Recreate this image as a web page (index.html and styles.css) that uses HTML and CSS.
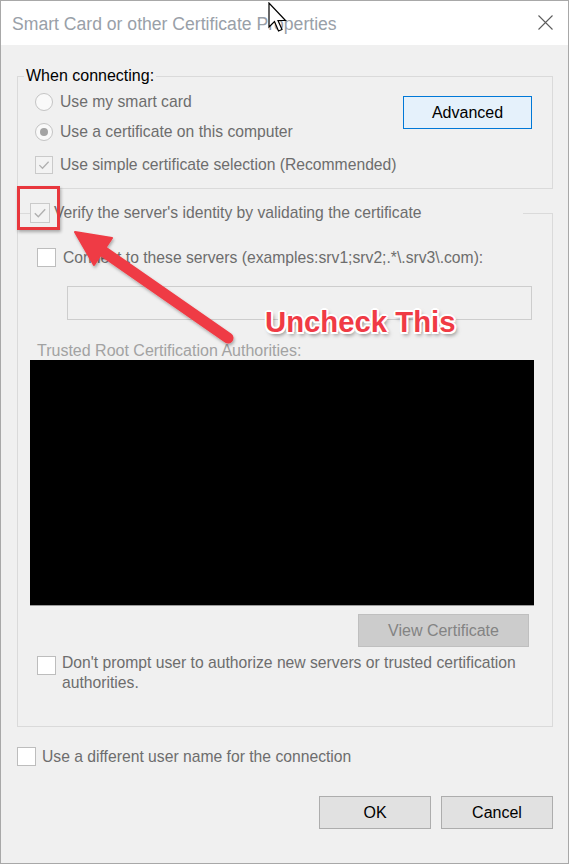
FILE: index.html
```html
<!DOCTYPE html>
<html lang="en">
<head>
<meta charset="utf-8">
<title>Smart Card or other Certificate Properties</title>
<link rel="stylesheet" href="styles.css">
</head>
<body>
<div class="window">
  <div class="titlebar">
    <span class="title">Smart Card or other Certificate Properties</span>
    <svg class="close" width="15" height="15" viewBox="0 0 15 15"><path d="M0.5 0.5 L14.5 14.5 M14.5 0.5 L0.5 14.5" stroke="#5c5c5c" stroke-width="1.1" fill="none"/></svg>
  </div>
  <div class="content">
    <div class="group group1">
      <div class="legend legend-text">When connecting:</div>
      <div class="group1-body">
        <div class="options">
          <div class="row opt"><span class="radio"></span><span class="label">Use my smart card</span></div>
          <div class="row opt"><span class="radio checked"></span><span class="label">Use a certificate on this computer</span></div>
          <div class="row opt opt-last"><span class="check disabled"><svg viewBox="0 0 18 18"><path d="M3.8 9.2 L7.3 12.7 L14.2 5.3" /></svg></span><span class="label">Use simple certificate selection (Recommended)</span></div>
        </div>
        <div class="btn btn-advanced">Advanced</div>
      </div>
    </div>

    <div class="group group2">
      <div class="legend legend-check">
        <span class="check disabled big"><svg viewBox="0 0 18 18"><path d="M3.8 9.2 L7.3 12.7 L14.2 5.3" /></svg></span>
        <span class="label verify">Verify the server's identity by validating the certificate</span>
      </div>
      <div class="row connect"><span class="check"></span><span class="label">Connect to these servers (examples:srv1;srv2;.*\.srv3\.com):</span></div>
      <div class="textbox"></div>
      <div class="trusted">Trusted Root Certification Authorities:</div>
      <div class="certlist"></div>
      <div class="btn btn-view">View Certificate</div>
      <div class="row dontprompt"><span class="check"></span><span class="label">Don't prompt user to authorize new servers or trusted certification authorities.</span></div>
    </div>

    <div class="row different"><span class="check"></span><span class="label">Use a different user name for the connection</span></div>

    <div class="actions">
      <div class="btn btn-std">OK</div>
      <div class="btn btn-std">Cancel</div>
    </div>
  </div>
</div>

<div class="highlight"></div>
<svg class="arrow" width="569" height="864" viewBox="0 0 569 864">
  <defs>
    <filter id="sh" x="-20%" y="-20%" width="140%" height="140%">
      <feDropShadow dx="1" dy="2" stdDeviation="1.5" flood-color="#000" flood-opacity="0.3"/>
    </filter>
  </defs>
  <g filter="url(#sh)" fill="#ef3b44" stroke="#ef3b44">
    <line x1="97" y1="247" x2="228" y2="338" stroke-width="11" stroke-linecap="round"/>
    <polygon points="75,232 112,238 94,265" stroke-width="2" stroke-linejoin="round"/>
  </g>
</svg>
<div class="callout">Uncheck This</div>
<svg class="cursor" width="20" height="31" viewBox="0 0 20 31">
  <path d="M1 1 L1 25 L6.5 19.5 L10.5 29 L14 27.5 L10 18.5 L17.5 18.5 Z" fill="#fff" stroke="#000" stroke-width="1.2" stroke-linejoin="miter"/>
</svg>
</body>
</html>
```
FILE: styles.css
```css
* { box-sizing: border-box; }
html, body { margin: 0; padding: 0; }
body {
  position: relative;
  width: 569px;
  height: 864px;
  overflow: hidden;
  background: #ffffff;
  font-family: "Liberation Sans", Arial, sans-serif;
  font-size: 15.7px;
  color: #6d6d6d;
}
.window {
  width: 569px;
  height: 864px;
  border: 1px solid #a8a8a8;
  background: #f0f0f0;
  display: flex;
  flex-direction: column;
}
.titlebar {
  height: 44px;
  flex: none;
  background: #ffffff;
  display: flex;
  justify-content: space-between;
  align-items: flex-start;
  padding: 2px 15px 0 11px;
}
.title {
  font-size: 17.6px;
  line-height: 42px;
  color: #99a0a8;
  white-space: nowrap;
}
.close { margin-top: 12px; flex: none; }

.content {
  flex: 1;
  display: flex;
  flex-direction: column;
  padding: 31px 15px 0 16px;
}

.group {
  border: 1px solid #dadada;
  display: flex;
  flex-direction: column;
}
.legend {
  background: #f0f0f0;
  width: max-content;
}
.legend-text {
  margin: -10px 0 0 6px;
  padding: 0 2px;
  height: 17px;
  line-height: 17px;
  color: #000;
  font-size: 16px;
}
.group1 { padding-bottom: 8px; }
.group1-body {
  display: flex;
  justify-content: space-between;
  align-items: flex-start;
  margin-top: 3px;
  padding: 0 20px 0 17px;
}
.options { display: flex; flex-direction: column; }
.row {
  display: flex;
  align-items: center;
  gap: 7px;
  white-space: nowrap;
}
.opt { height: 30px; }
.opt-last { margin-top: 3px; }
.label { line-height: 20px; }

.radio {
  width: 18px;
  height: 18px;
  border-radius: 50%;
  border: 1px solid #c4c4c4;
  background: #f9f9f9;
  display: flex;
  align-items: center;
  justify-content: center;
  flex: none;
}
.radio.checked::after {
  content: "";
  width: 8px;
  height: 8px;
  border-radius: 50%;
  background: #a3a3a3;
}

.check {
  width: 19px;
  height: 19px;
  border: 1px solid #bdbdbd;
  background: #ffffff;
  flex: none;
  display: flex;
}
.check.disabled {
  width: 18px;
  height: 18px;
  border-color: #cacaca;
  background: #f3f3f3;
}
.check svg { width: 100%; height: 100%; }
.check svg path { fill: none; stroke: #b0b0b0; stroke-width: 1.4; }
.check.big { width: 20px; height: 20px; }

.btn {
  display: flex;
  align-items: center;
  justify-content: center;
  color: #000;
  white-space: nowrap;
  font-size: 16px;
}
.btn-advanced {
  margin-top: 9px;
  width: 129px;
  height: 33px;
  background: #e5f1fb;
  border: 1px solid #0078d7;
}

.group2 { margin-top: 24px; }
.legend-check {
  margin: -11px 0 0 12px;
  width: 493px;
  height: 20px;
  display: flex;
  align-items: center;
  gap: 4px;
  white-space: nowrap;
}
.connect { margin: 25px 0 0 19px; height: 19px; }
.connect .label { margin-top: 1px; }
.textbox {
  margin: 19px 20px 0 49px;
  height: 34px;
  border: 1px solid #cdcdcd;
  background: #f0f0f0;
}
.trusted {
  margin: 22px 0 0 19px;
  height: 18px;
  line-height: 18px;
  color: #a2a2a2;
  font-size: 16px;
}
.certlist {
  margin: 0 18px 0 12px;
  height: 246px;
  background: #000;
  border-bottom: 1px solid #9c9c9c;
}
.btn-view {
  align-self: flex-end;
  margin: 8px 23px 0 0;
  width: 171px;
  height: 33px;
  background: #cccccc;
  border: 1px solid #bfbfbf;
  color: #838383;
}
.dontprompt {
  margin: 6px 20px 33px 19px;
  align-items: flex-start;
  gap: 6px;
  white-space: normal;
}
.dontprompt .check { margin-top: 3px; }
.dontprompt .label { max-width: 470px; }

.different { margin-top: 20px; height: 19px; gap: 6px; }

.actions {
  display: flex;
  justify-content: flex-end;
  gap: 10px;
  margin-top: 30px;
}
.btn-std {
  width: 112px;
  height: 33px;
  background: #e1e1e1;
  border: 1px solid #adadad;
}

/* annotation overlays */
.highlight {
  position: absolute;
  left: 17px;
  top: 186px;
  width: 43px;
  height: 44px;
  border: 3px solid #e8373d;
  box-shadow: 1px 2px 3px rgba(0,0,0,0.3);
}
.arrow {
  position: absolute;
  left: 0;
  top: 0;
  pointer-events: none;
}
.callout {
  position: absolute;
  left: 265px;
  top: 307px;
  font-size: 29.3px;
  line-height: 29px;
  font-weight: bold;
  color: #f03b45;
  white-space: nowrap;
  text-shadow:
    2px 0 0 #fff, -2px 0 0 #fff, 0 2px 0 #fff, 0 -2px 0 #fff,
    1.5px 1.5px 0 #fff, -1.5px 1.5px 0 #fff, 1.5px -1.5px 0 #fff, -1.5px -1.5px 0 #fff,
    2px 3px 4px rgba(0,0,0,0.55);
}
.cursor {
  position: absolute;
  left: 268px;
  top: 2px;
}
```
